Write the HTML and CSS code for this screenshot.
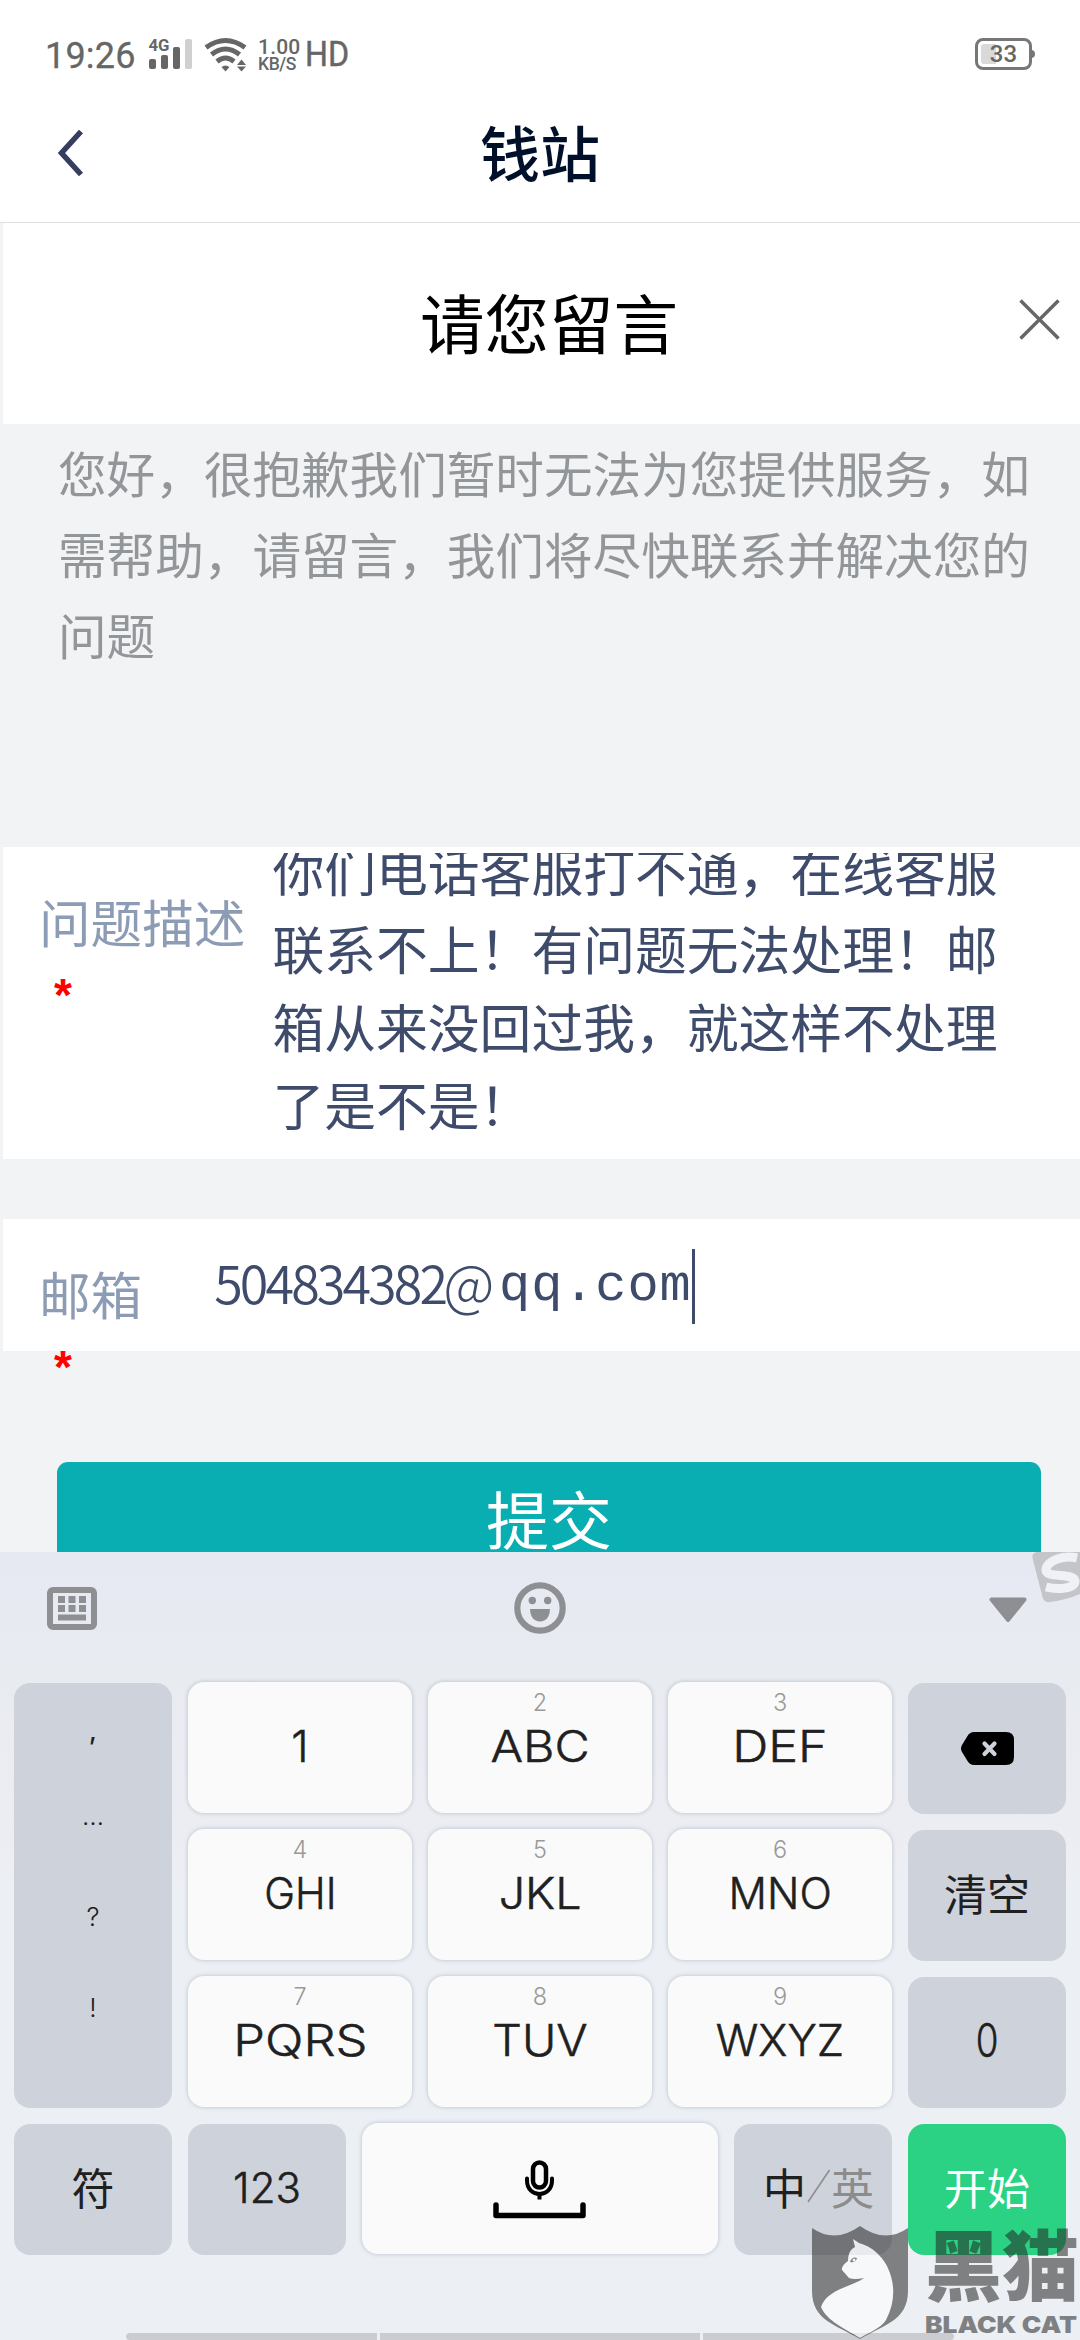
FILE: index.html
```html
<!DOCTYPE html>
<html lang="zh-CN">
<head>
<meta charset="utf-8">
<title>钱站</title>
<link rel="stylesheet" href="styles.css">
</head>
<body>
<div class="screen">
  <header class="status">
    <span class="clock">19:26</span>
    <svg class="signal" width="44" height="32" viewBox="0 0 44 32">
      <text x="-0.5" y="13" class="net" textLength="21" lengthAdjust="spacingAndGlyphs">4G</text>
      <rect x="0" y="21" width="7" height="10" rx="2"/>
      <rect x="12" y="17" width="7" height="14" rx="2"/>
      <rect x="24" y="9" width="7" height="22" rx="2"/>
      <rect x="36" y="1" width="7" height="30" rx="2" class="off"/>
    </svg>
    <svg class="wifi" width="44" height="34" viewBox="0 0 44 34">
      <g fill="none" stroke="#666" stroke-width="5">
        <path d="M2 9.500Q21.500 -4.500 41 9.500"/>
        <path d="M7.500 16.500Q21.500 5.500 35.500 16.500"/>
        <path d="M13 23.500Q21.500 16.500 30 23.500"/>
      </g>
      <path d="M17.500 29Q21.500 26 25.500 29L21.500 33.500Z"/>
      <path d="M37.500 21.500L42 27H33Z M33 28.500H42L37.500 33.500Z"/>
    </svg>
    <span class="speed"><b>1.00</b><i>KB/S</i></span>
    <span class="hd">HD</span>
    <span class="battery"><span>33</span></span>
  </header>
  <nav class="topbar">
    <svg class="back" width="30" height="50" viewBox="0 0 30 50"><path d="M25 3.500L5.500 25L25 46.500" fill="none" stroke="#363e60" stroke-width="5.500"/></svg>
    <h1>钱站</h1>
  </nav>
  <main class="page">
    <div class="panel-head">
      <h2>请您留言</h2>
      <svg class="close" width="41" height="41" viewBox="0 0 41 41"><path d="M1.500 1.500L39.500 39.500M39.500 1.500L1.500 39.500" stroke="#666" stroke-width="3.400"/></svg>
    </div>
    <p class="notice">您好，很抱歉我们暂时无法为您提供服务，如需帮助，请留言，我们将尽快联系并解决您的问题</p>
    <section class="field desc">
      <div class="label">问题描述<span class="star">*</span></div>
      <div class="area"><p>你们电话客服打不通，在线客服联系不上！有问题无法处理！邮箱从来没回过我，就这样不处理了是不是！</p></div>
    </section>
    <section class="field mail">
      <div class="label">邮箱<span class="star">*</span></div>
      <div class="input"><span class="digits">504834382</span><span class="at">@</span><span class="host">qq.com</span><span class="caret"></span></div>
    </section>
    <div class="submit">提交</div>
  </main>
  <section class="keyboard">
    <div class="tools">
      <svg width="50" height="43" viewBox="0 0 50 43">
        <rect x="3" y="3" width="44" height="37" rx="3" fill="none" stroke="#8e8f93" stroke-width="6"/>
        <path d="M11 9h7v7h-7zM21.500 9h7v7h-7zM32 9h7v7h-7zM11 18h7v7h-7zM21.500 18h7v7h-7zM32 18h7v7h-7zM11 27.500h28v6h-28z" fill="#8e8f93"/>
      </svg>
      <svg width="52" height="52" viewBox="0 0 52 52">
        <circle cx="26" cy="26" r="22.700" fill="none" stroke="#8e8f93" stroke-width="6.200"/>
        <circle cx="18.300" cy="18.500" r="3.700" fill="#8e8f93"/><circle cx="33.700" cy="18.500" r="3.700" fill="#8e8f93"/>
        <path d="M16 27H36Q35.500 39 26 39.500Q16.500 39 16 27Z" fill="#8e8f93"/>
      </svg>
      <svg class="fold" width="38" height="26" viewBox="0 0 38 26"><path d="M2.500 2.500H35.500L19 23Z" fill="#8e8f93" stroke="#8e8f93" stroke-width="4" stroke-linejoin="round"/></svg>
      <svg class="skin" width="48" height="51" viewBox="0 0 48 51">
        <path d="M5 0H48V42Q34 48 18 50Q12 51 10.500 45L0.500 6Q-0.500 1 5 0Z" fill="#c4c5c9"/>
        <path d="M45 6C32 3 16 8 14 17C12 27 42 20 43 29C43 37 25 38 14 35" fill="none" stroke="#f0f1f6" stroke-width="9"/>
      </svg>
    </div>
    <div class="pad">
      <div class="key grey marks"><span class="comma">,</span><span class="dots">…</span><span>?</span><span>!</span></div>
      <div class="key one"><b>1</b></div>
      <div class="key"><i>2</i><b class="abc">ABC</b></div>
      <div class="key"><i>3</i><b class="def">DEF</b></div>
      <div class="key grey"><svg width="53" height="33" viewBox="0 0 53 33"><path d="M13 0H45Q53 0 53 8V25Q53 33 45 33H13Q9 33 6.500 29L1 20Q-1 16.500 1 13L6.500 4Q9 0 13 0Z"/><path d="M23.500 11.500L33.500 22M33.500 11.500L23.500 22" stroke="#ced2db" stroke-width="4.200" stroke-linecap="round"/></svg></div>
      <div class="key"><i>4</i><b class="ghi">GHI</b></div>
      <div class="key"><i>5</i><b class="jkl">JKL</b></div>
      <div class="key"><i>6</i><b class="mno">MNO</b></div>
      <div class="key grey cjk">清空</div>
      <div class="key"><i>7</i><b class="pqrs">PQRS</b></div>
      <div class="key"><i>8</i><b class="tuv">TUV</b></div>
      <div class="key"><i>9</i><b class="wxyz">WXYZ</b></div>
      <div class="key grey num zero"><span>0</span></div>
    </div>
    <div class="lastrow">
      <div class="key grey cjk">符</div>
      <div class="key grey num">123</div>
      <div class="key space"><svg width="96" height="60" viewBox="0 0 96 60">
        <g fill="none" stroke="#000">
          <rect x="41" y="3.500" width="13" height="25" rx="6.500" stroke-width="4.500"/>
          <path d="M35 19.500V21.500C35 39.500 60 39.500 60 21.500V19.500" stroke-width="4" stroke-linecap="round"/>
          <path d="M47.500 34V40.500" stroke-width="4"/>
          <path d="M4 46V56.500H91V46" stroke-width="5.500" stroke-linecap="round" stroke-linejoin="round"/>
        </g></svg></div>
      <div class="key grey cjk lang"><span>中</span><svg width="24" height="36" viewBox="0 0 24 36"><path d="M1 34L22.500 2" stroke="#8e8e8e" stroke-width="1.600"/></svg><em>英</em></div>
      <div class="key grey cjk go">开始</div>
    </div>
    <div class="homebar"><span></span><span></span><span></span></div>
  </section>
  <div class="watermark">
    <svg width="98" height="116" viewBox="0 0 98 116">
      <path d="M1 3Q24 19 49 1Q74 19 97 3V66C97 96 72 100 49 114C26 100 1 96 1 66Z" fill="#262626"/>
      <path class="cat" d="M42 14L48 18Q66 23 76 41Q89 68 75 95C69 104 57 108 49 113C33 103 16 96 10 82C16 64 43 61 53 53Q43 55 38 53L31 45Q30 41 37 36Q37 25 44 22Z"/>
      <path d="M39 37Q41 31 46 33Q45 38 39 37Z" fill="#262626"/><circle cx="43" cy="35" r="1.500" class="cat"/>
    </svg>
    <div class="brand"><strong>黑猫</strong><svg width="154" height="20" viewBox="0 0 154 20"><text x="0" y="18" textLength="152" lengthAdjust="spacingAndGlyphs">BLACK CAT</text></svg></div>
  </div>
</div>
</body>
</html>
```
FILE: styles.css
```css
* { box-sizing: border-box; margin: 0; padding: 0; }
b, i, em, h1, h2 { font-weight: inherit; font-style: normal; }
svg { display: block; flex: none; overflow: visible; }
body { background: #fff; }
.screen {
  position: relative; width: 1080px; height: 2340px; overflow: hidden;
  display: flex; flex-direction: column;
  font-family: "Noto Sans CJK SC", "Noto Sans", sans-serif;
}
.status {
  height: 108px; flex: none; display: flex; align-items: center;
  padding: 0 45px 0 45px; font-family: Roboto, sans-serif; color: #666; font-weight: 400;
}
.clock { width: 104px; font-size: 36px; line-height: 42px; margin-top: 3px; letter-spacing: .2px; -webkit-text-stroke: .3px; }
.signal { fill: #666; }
.signal .net { font: 700 17px Roboto, sans-serif; }
.signal .off { fill: #d0d0d0; }
.wifi { fill: #666; margin: 1px 10px 0 11px; }
.speed { width: 47px; display: flex; flex-direction: column; font-weight: 500; margin-top: 2px; white-space: nowrap; }
.speed b { font-size: 21px; line-height: 18px; letter-spacing: .2px; }
.speed i { font-size: 17.500px; line-height: 17px; letter-spacing: -.4px; }
.hd { font-size: 35px; line-height: 42px; transform: scaleX(.92); transform-origin: left; margin-top: 1px; -webkit-text-stroke: .5px; }
.battery {
  margin-left: auto; margin-right: 3px; position: relative; width: 57px; height: 32px; border: 3px solid #777; border-radius: 8px;
  padding: 3px; display: flex;
}
.battery span { flex: 1; background: linear-gradient(90deg, #d9d9d9 15px, transparent 15px); border-radius: 3px; text-align: center; font-weight: 500; font-size: 24px; line-height: 21px; }
.battery::after { content: ""; position: absolute; right: -6px; top: 9px; width: 4px; height: 8px; border-radius: 0 4px 4px 0; background: #777; }
.topbar { height: 115px; flex: none; border-bottom: 1px solid #e2e2e2; display: flex; align-items: flex-start; padding: 20px 56px 0; }
.topbar h1 { flex: 1; text-align: center; margin: -22px 30px 0 0; font-size: 60px; line-height: 90px; color: #00102a; font-weight: 500; }
.page { flex: none; height: 1329px; overflow: hidden; background: #f2f3f5; padding-left: 3px; }
.panel-head { height: 201px; background: #fff; display: flex; align-items: center; padding-right: 20px; }
.panel-head h2 { flex: 1; text-align: center; font-size: 64.500px; line-height: 90px; margin: -5px 0 0 76px; color: #000; }
.close { margin-top: -9px; }
.notice { height: 423px; padding: 8px 45px 0 55px; font-size: 48.600px; line-height: 81px; color: #939699; }
.field { background: #fff; display: flex; color: #8d9cb5; }
.label { flex: none; padding: 44px 0 0 36px; font-size: 51.600px; line-height: 60px; }
.star { display: block; padding-left: 15px; font-size: 46px; font-weight: 700; line-height: 60px; margin-top: 14px; color: #f00; font-family: "Liberation Sans", sans-serif; }
.desc { height: 312px; }
.area { margin: 6px 0 0 27px; width: 740px; height: 300px; overflow: hidden; color: #3e4b6b; }
.area p { margin-top: -22px; font-size: 51.800px; line-height: 78px; }
.mail { margin-top: 60px; height: 132px; }
.input { display: flex; align-items: center; margin-left: 72px; height: 132px; color: #3e4b6b; font-size: 52px; line-height: 74px; }
.digits { letter-spacing: -2.900px; margin-top: -7px; font-weight: 350; }
.at { width: 54px; margin-top: -6px; font-weight: 300; transform: scale(1.08, 1.1); transform-origin: 40% 55%; }
.host { font-family: "Liberation Mono", monospace; letter-spacing: .9px; margin-top: 3px; }
.caret { width: 3px; height: 75px; margin-top: 2px; background: #3e4b6b; }
.submit { margin: 111px 39px 0 54px; height: 130px; border-radius: 11px; background: #09aeb2; color: #fff; font-size: 63px; line-height: 110px; text-align: center; font-weight: 400; }
.keyboard { position: relative; flex: 1; background: linear-gradient(#e6e9f2 0, #e8ebf0 120px, #ecedf3 270px, #ecf0f5 360px); padding: 0 14px; }
.tools { height: 130px; display: flex; justify-content: space-between; padding: 0 39px 18px 33px; align-items: center; }
.tools svg:nth-child(2) { margin-right: 7px; }
.fold { margin-top: 4px; }
.skin { position: absolute; right: 0; top: 0; }
.pad { display: grid; grid-template-columns: 158px 224px 224px 224px 158px; grid-auto-rows: 131px; gap: 16px; }
.key {
  border-radius: 16px; background: #fafafa; box-shadow: 0 0 4px rgba(60, 75, 95, .3); color: #202020;
  display: flex; flex-direction: column; align-items: center; padding-top: 8px; font-family: Inter, sans-serif; font-weight: 300;
}
.key i { font-size: 23.500px; line-height: 26px; color: #999; }
.key b { font-size: 44px; line-height: 44px; margin-top: 8px; -webkit-text-stroke: .5px; }
.one b { margin-top: 34px; }
.key .abc { transform: scaleX(1.1); }
.key .def { transform: scaleX(1.14); }
.key .ghi { transform: scaleX(.94); }
.key .jkl { transform: scaleX(1.06); }
.key .mno { transform: scaleX(.97); }
.key .pqrs { transform: scaleX(1.15); }
.key .tuv { transform: scaleX(1.06); }
.grey { background: #ced2db; box-shadow: none; margin: 1px 0 -1px; padding: 0; justify-content: center; }
.marks { grid-row: span 3; justify-content: flex-start; font-size: 26px; padding-top: 26px; }
.marks span { height: 90.500px; line-height: 53px; }
.marks .comma { line-height: 44px; font-weight: 500; }
.marks .dots { line-height: 31px; }
.cjk { font-family: "Noto Sans CJK SC", sans-serif; font-size: 43px; font-weight: 400; padding-bottom: 8px; }
.num { font-size: 42px; padding-bottom: 5px; -webkit-text-stroke: .5px; }
.zero { font-size: 46px; }
.zero span { transform: scaleX(.8); }
.lastrow { display: grid; grid-template-columns: 158px 158px 356px 158px 158px; grid-auto-rows: 131px; gap: 16px; margin-top: 16px; }
.space { padding: 36px 0 0; }
.lang { flex-direction: row; align-items: center; gap: .5px; padding-left: 11px; }
.lang em { color: #8c8c8c; }
.go { background: #2bd283; color: #fff; }
.homebar { display: flex; gap: 3px; margin: 79px 112px 0; height: 7px; }
.homebar span { flex: 320; background: #cbccd1; }
.homebar span:first-child { flex: 251; border-radius: 4px 0 0 4px; }
.homebar span:last-child { flex: 251; border-radius: 0 4px 4px 0; }
.watermark { position: absolute; left: 811px; top: 2225px; display: flex; gap: 16px; opacity: .55; color: #262626; fill: #262626; }
.watermark .cat { fill: #fff; }
.brand strong { display: block; font-size: 77px; line-height: 73px; font-weight: 900; height: 90px; white-space: nowrap; }
.brand text { font: 900 23px Inter, sans-serif; }
```
